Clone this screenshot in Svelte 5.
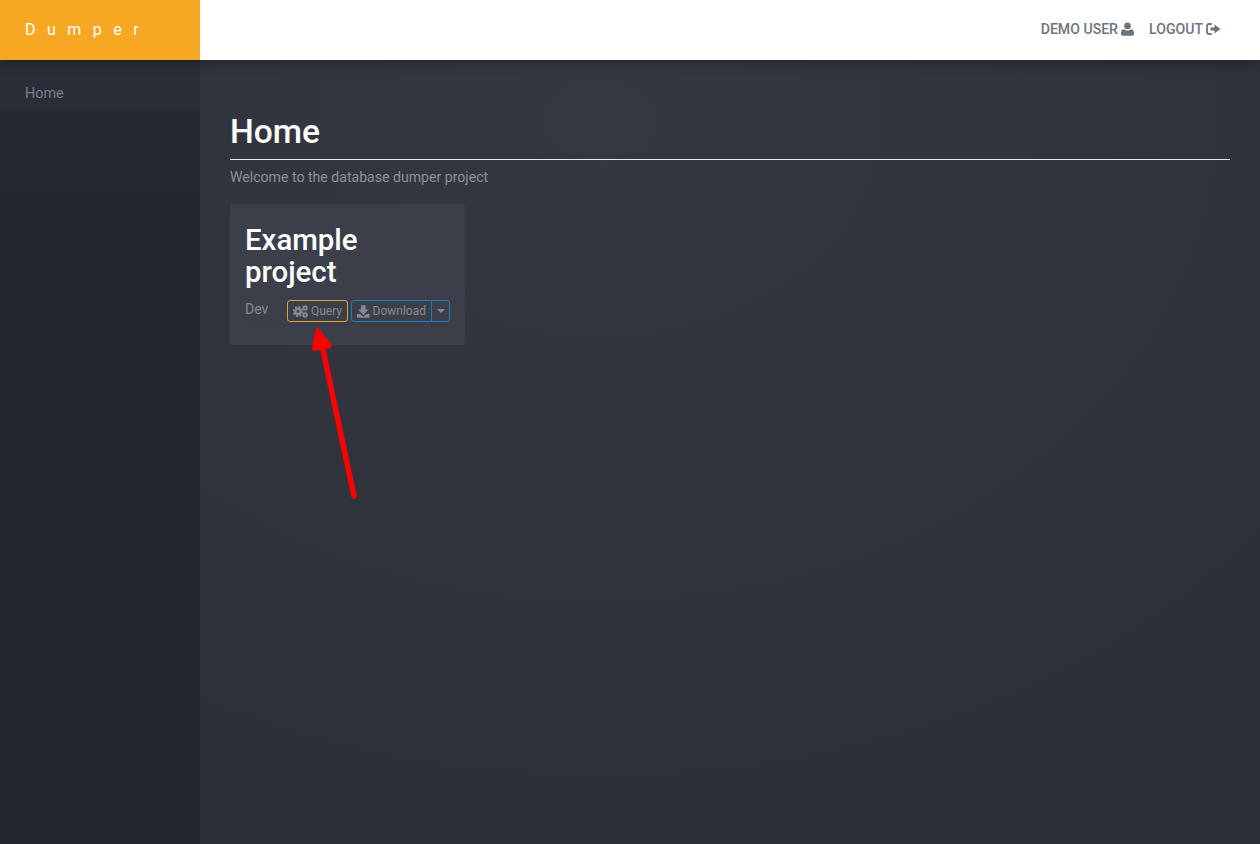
<script>
    let user = "DEMO USER";
    let title = "Example project";
</script>

<div class="page">
    <header class="topbar">
        <div class="brand">Dumper</div>
        <nav class="topnav">
            <a href="#user">
                {user}
                <svg class="ico" viewBox="0 0 13 14" width="13" height="14"><path d="M6.500 0.600a3.300 3.300 0 1 1 0 6.600a3.300 3.300 0 1 1 0-6.600zM3.100 7.200c1 .8 2.100 1.200 3.400 1.200s2.400-.4 3.400-1.200c1.900 0 3.100 1.500 3.100 3.800v1c0 1-.7 1.700-1.700 1.700H1.800C.8 13.700 0 13 0 12v-1c0-2.300 1.200-3.800 3.100-3.800z" fill="currentColor"/></svg>
            </a>
            <a href="#logout">
                LOGOUT
                <svg class="ico" viewBox="0 0 15 12" width="15" height="12"><path d="M5 1H3C1.700 1 1 1.800 1 3v6c0 1.200.7 2 2 2h2" fill="none" stroke="currentColor" stroke-width="1.800" stroke-linecap="round"/><path d="M4.500 4.500H8.500V1.500L14.500 6L8.500 10.500V7.500H4.500z" fill="currentColor"/></svg>
            </a>
        </nav>
    </header>

    <div class="body">
        <aside class="sidebar">
            <a class="side-item" href="#home">Home</a>
        </aside>

        <main class="main">
            <h1>Home</h1>
            <p class="lead">Welcome to the database dumper project</p>

            <div class="card">
                <h2>{title}</h2>
                <div class="row">
                    <span class="env">Dev</span>
                    <div class="actions">
                        <button class="btn query">
                            <svg viewBox="0 0 15 13" width="15" height="13">
                                <circle cx="5" cy="6.500" r="4.600" fill="none" stroke="currentColor" stroke-width="1.800" stroke-dasharray="1.900 1.710"/>
                                <circle cx="5" cy="6.500" r="2.700" fill="none" stroke="currentColor" stroke-width="2.400"/>
                                <circle cx="12.200" cy="3" r="1.800" fill="none" stroke="currentColor" stroke-width="1.800"/>
                                <circle cx="12.200" cy="10" r="1.800" fill="none" stroke="currentColor" stroke-width="1.800"/>
                            </svg>
                            Query
                        </button>
                        <div class="split">
                            <button class="btn dl">
                                <svg viewBox="0 0 13 13" width="13" height="13">
                                    <path d="M4.200 0h4.600v4.500h3.200L6.500 10L1 4.500h3.200z" fill="currentColor"/>
                                    <path d="M0 9h3.200l3.300 2.800l3.300-2.800H13v4H0z" fill="currentColor"/>
                                </svg>
                                Download
                            </button>
                            <button class="btn caret" aria-label="More"><span></span></button>
                        </div>
                    </div>
                </div>
            </div>
        </main>
    </div>

    <svg class="arrow" viewBox="0 0 70 185" width="70" height="185">
        <path d="M54 176L22 25" fill="none" stroke="#ff0000" stroke-width="5.500" stroke-linecap="round"/>
        <path d="M17.500 10L30 26L14 29z" fill="#ff0000" stroke="#ff0000" stroke-width="4" stroke-linejoin="round"/>
    </svg>
</div>

<style>
:global(body) {
    margin: 0;
    background: #2d3039;
    font-family: Roboto, "Liberation Sans", sans-serif;
}

.page {
    position: relative;
    height: 844px;
    overflow: hidden;
    display: flex;
    flex-direction: column;
}

.topbar {
    position: relative;
    z-index: 2;
    height: 60px;
    flex: none;
    display: flex;
    justify-content: space-between;
    background: #fff;
    box-shadow: 0 0 14px rgba(0, 0, 0, .45);
}

.brand {
    width: 200px;
    box-sizing: border-box;
    padding-left: 25px;
    line-height: 60px;
    font-size: 16px;
    letter-spacing: 11.5px;
    color: #fff;
    background: #f7a823;
}

.topnav {
    display: flex;
    align-items: center;
    gap: 15px;
    padding: 0 39px 2px 0;
}

.topnav a {
    display: flex;
    align-items: center;
    gap: 3px;
    color: #6c757d;
    font-size: 14.1px;
    font-weight: 500;
    text-decoration: none;
}

.body {
    flex: 1;
    display: flex;
}

.sidebar {
    width: 200px;
    flex: none;
    background: linear-gradient(#25282f, #22252d);
}

.side-item {
    display: block;
    height: 50px;
    box-sizing: border-box;
    padding: 25px 25px 0;
    line-height: 18px;
    font-size: 14.4px;
    color: #74808e;
    text-decoration: none;
    background: #2a2d36;
}

.main {
    flex: 1;
    padding: 51px 30px 0;
    background: radial-gradient(ellipse 900px 700px at 400px 60px, #353841, #2d3039);
}

h1 {
    margin: 0;
    padding-bottom: 6px;
    font-size: 33.6px;
    font-weight: 500;
    line-height: 42px;
    color: #fff;
    border-bottom: 1px solid #e5e7ea;
}

.lead {
    margin: 7px 0 0;
    font-size: 14.1px;
    line-height: 20px;
    color: #8c9099;
}

.card {
    width: 235px;
    height: 141px;
    box-sizing: border-box;
    margin-top: 17px;
    padding: 20px 15px 0;
    border-radius: 3px;
    background: #3c3f49;
}

h2 {
    margin: 0;
    font-size: 29.4px;
    font-weight: 500;
    line-height: 32px;
    color: #fff;
}

.row {
    display: flex;
    align-items: center;
    justify-content: space-between;
    margin-top: 12px;
    padding-bottom: 2px;
    border-bottom: 1px solid #383b45;
}

.env {
    font-size: 14px;
    color: #868a93;
    margin-top: -5px;
}

.actions {
    display: flex;
    gap: 3px;
}

.split {
    display: flex;
}

.btn {
    display: flex;
    align-items: center;
    gap: 3px;
    height: 22px;
    box-sizing: border-box;
    padding: 0 5px;
    font-family: inherit;
    font-size: 12px;
    color: #868a93;
    background: transparent;
    border: 1px solid #e3a33b;
    border-radius: 3px;
}

.query {
    width: 61px;
}

.dl {
    width: 81px;
    border-color: #1480c0;
    border-radius: 3px 0 0 3px;
}

.caret {
    width: 19px;
    margin-left: -1px;
    justify-content: center;
    border-color: #1480c0;
    border-radius: 0 3px 3px 0;
}

.caret span {
    width: 0;
    height: 0;
    border-left: 4px solid transparent;
    border-right: 4px solid transparent;
    border-top: 4px solid #868a93;
}

.arrow {
    position: absolute;
    left: 300px;
    top: 320px;
}
</style>
